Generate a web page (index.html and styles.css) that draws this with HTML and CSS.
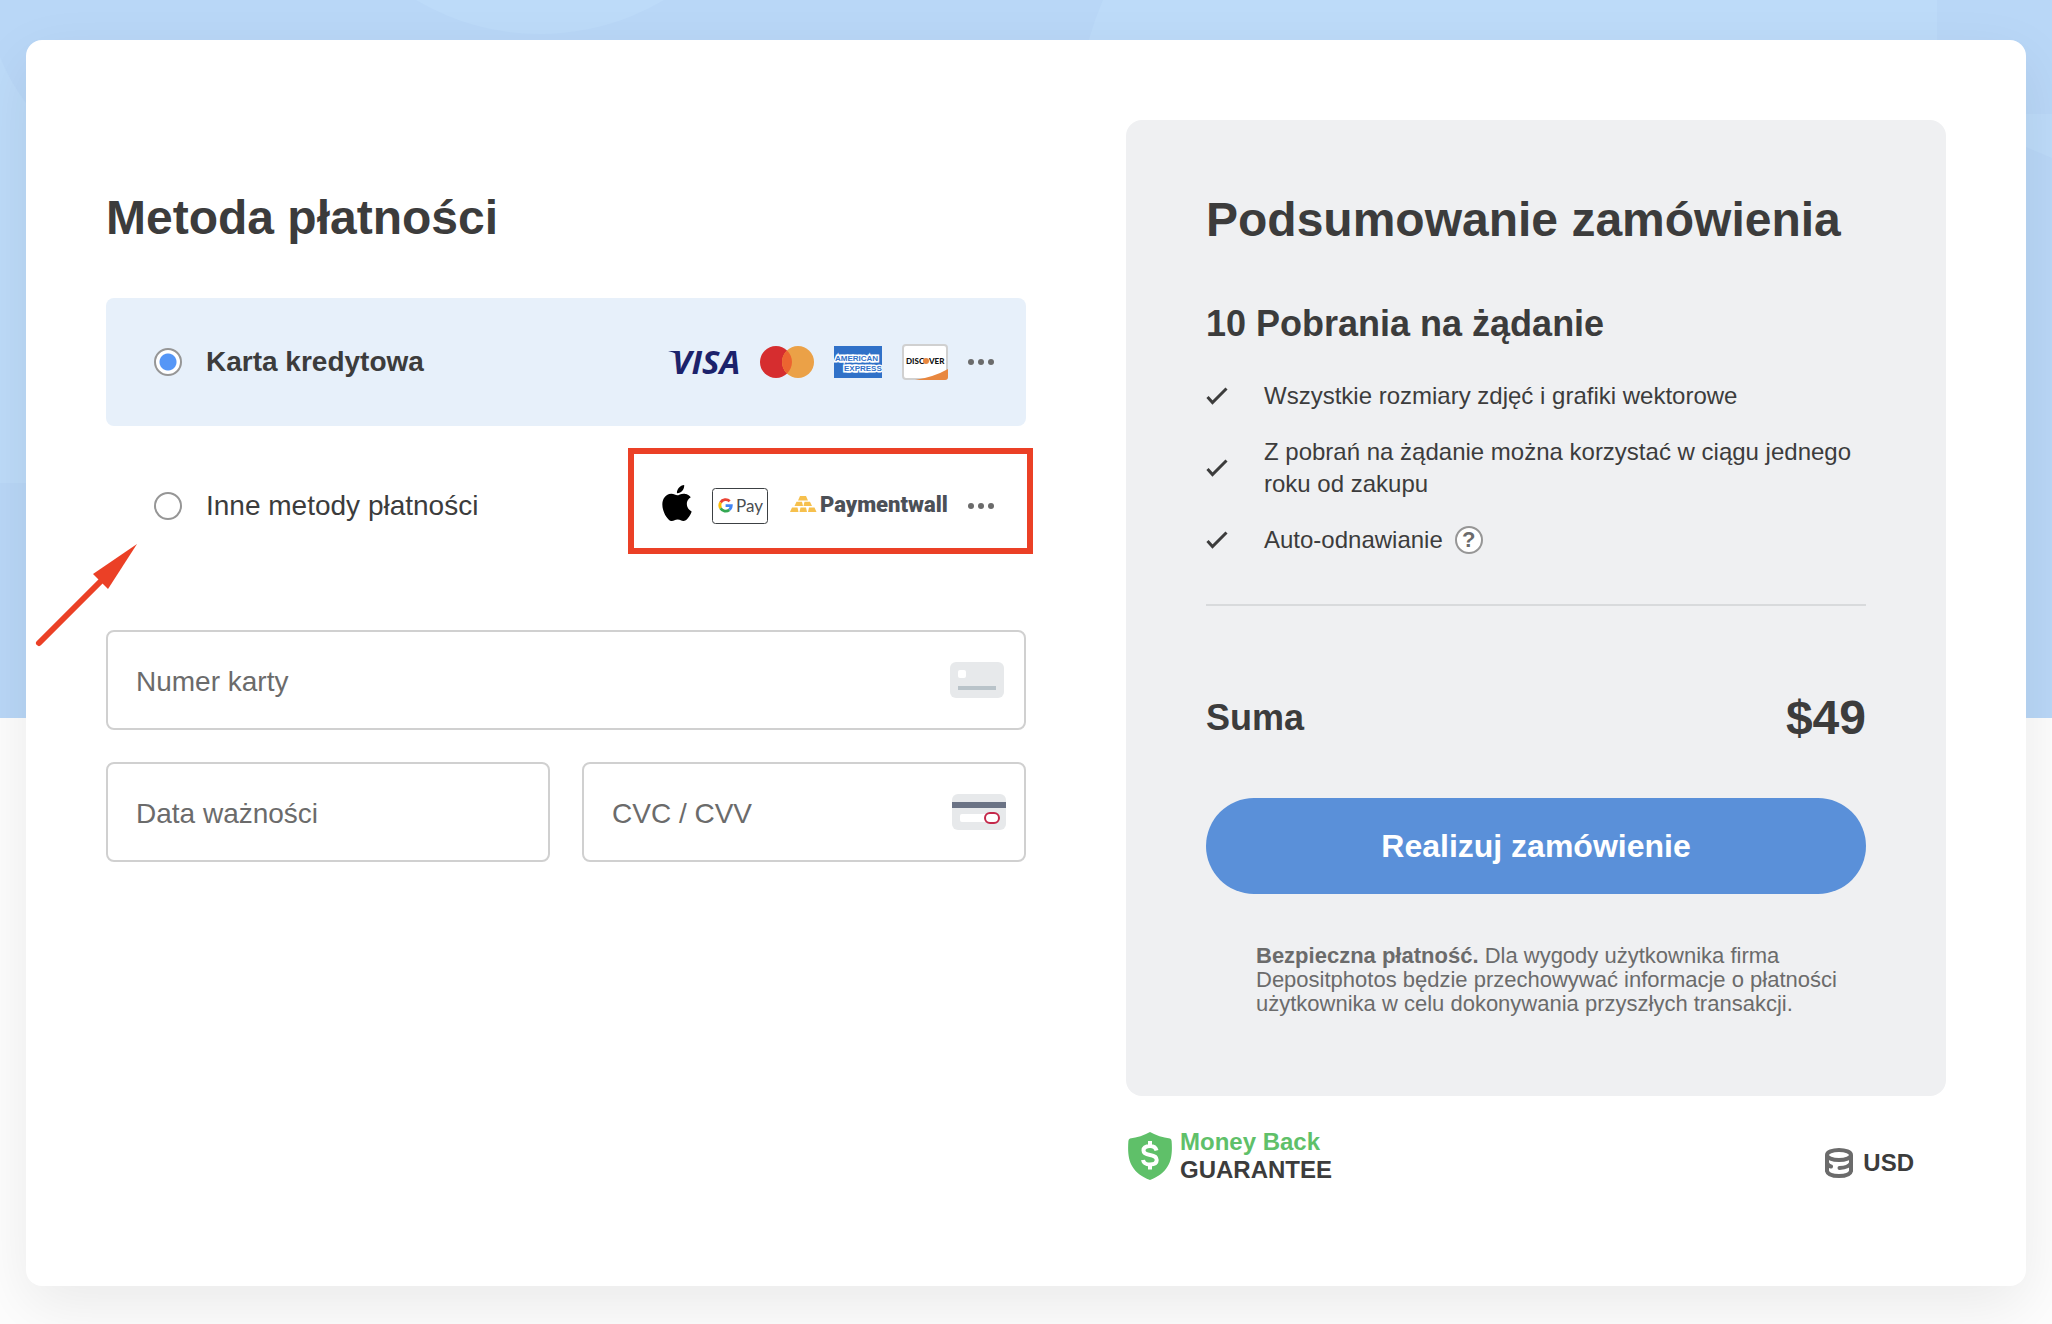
FILE: index.html
```html
<!DOCTYPE html>
<html lang="pl">
<head>
    <meta charset="utf-8">
    <meta name="viewport" content="width=device-width, initial-scale=1">
    <title>Metoda płatności</title>
    <link rel="stylesheet" href="styles.css">
</head>
<body>
    <div class="backdrop">
        <svg class="backdrop-shapes" width="2052" height="718" viewBox="0 0 2052 718" aria-hidden="true">
            <circle cx="540" cy="-209" r="243"/>
            <path d="M0 57Q10 82 26 103L120 300V483H0z"/>
            <path d="M1103 0H1937V114H2052V158L2026 147L1900 80H1080Q1086 40 1103 0z"/>
        </svg>
    </div>

    <main class="checkout">
        <form class="payment">
            <h1 class="title">Metoda płatności</h1>

            <div class="methods">
                <label class="method method-active">
                    <input class="method-radio" type="radio" name="method" checked>
                    <span class="method-name">Karta kredytowa</span>
                    <span class="logos">
                        <svg class="visa" width="72" height="24" viewBox="0 0 72 24" role="img" aria-label="Visa">
                            <path d="M0 1Q10 3 12 8L11 1z" fill="#1c226b"/>
                            <text class="visa-text" x="4" y="24">VISA</text>
                        </svg>
                        <svg width="54" height="32" viewBox="0 0 54 32" role="img" aria-label="Mastercard">
                            <circle cx="16" cy="16" r="16" fill="#d62d2f"/>
                            <circle cx="38" cy="16" r="16" fill="#eba147"/>
                            <path d="M27 4.400a16 16 0 0 1 0 23.200a16 16 0 0 1 0-23.200z" fill="#ec6430"/>
                        </svg>
                        <svg width="48" height="32" viewBox="0 0 48 32" role="img" aria-label="American Express">
                            <rect width="48" height="32" fill="#3071c8"/>
                            <text class="amex-text" x="1" y="15">AMERICAN</text>
                            <text class="amex-text" x="10" y="25">EXPRESS</text>
                        </svg>
                        <svg width="46" height="36" viewBox="0 0 46 36" role="img" aria-label="Discover">
                            <rect x="1" y="1" width="44" height="34" rx="3" fill="#fff" stroke="#d0d0d0" stroke-width="2"/>
                            <path d="M13 36Q32 33 46 25V33Q46 36 43 36z" fill="#e8873f"/>
                            <text class="discover-text" x="4" y="20">DISC</text>
                            <circle cx="24" cy="17" r="3" fill="#e8873f"/>
                            <text class="discover-text" x="27" y="20">VER</text>
                        </svg>
                        <svg width="26" height="6" viewBox="0 0 26 6" fill="#6b6b6b" aria-hidden="true">
                            <circle cx="3" cy="3" r="3"/><circle cx="13" cy="3" r="3"/><circle cx="23" cy="3" r="3"/>
                        </svg>
                    </span>
                </label>

                <label class="method">
                    <input class="method-radio" type="radio" name="method">
                    <span class="method-name">Inne metody płatności</span>
                    <span class="logos">
                        <svg class="apple" width="30" height="36" viewBox="2 0 20 24" role="img" aria-label="Apple Pay">
                            <path d="M12.152 6.896c-.948 0-2.415-1.078-3.96-1.04-2.04.027-3.91 1.183-4.961 3.014-2.117 3.675-.546 9.103 1.519 12.09 1.013 1.454 2.208 3.09 3.792 3.039 1.52-.065 2.09-.987 3.935-.987 1.831 0 2.35.987 3.96.948 1.637-.026 2.676-1.48 3.676-2.948 1.156-1.688 1.636-3.325 1.662-3.415-.039-.013-3.182-1.221-3.22-4.857-.026-3.04 2.48-4.494 2.597-4.559-1.429-2.09-3.623-2.324-4.39-2.376-2-.156-3.675 1.09-4.61 1.09zM15.53 3.83c.843-1.012 1.4-2.427 1.245-3.83-1.207.052-2.662.805-3.532 1.818-.78.896-1.454 2.338-1.273 3.714 1.338.104 2.715-.688 3.559-1.701"/>
                        </svg>
                        <svg width="56" height="36" viewBox="0 0 56 36" role="img" aria-label="Google Pay">
                            <rect x=".5" y=".5" width="55" height="35" rx="3" fill="#fff" stroke="#3c4043"/>
                            <g fill="none" stroke-width="2.8">
                                <path d="M17.7 13.3A5.8 5.8 0 0 0 8.6 14.5" stroke="#ea4335"/>
                                <path d="M8.6 14.5A5.8 5.8 0 0 0 8.6 20.3" stroke="#fbbc04"/>
                                <path d="M8.6 20.3A5.8 5.8 0 0 0 17.3 21.8" stroke="#34a853"/>
                                <path d="M17.3 21.8A5.8 5.8 0 0 0 19.3 17.6H13.6" stroke="#4285f4"/>
                            </g>
                            <text class="gpay-text" x="24" y="24">Pay</text>
                        </svg>
                        <svg width="160" height="32" viewBox="0 0 160 32" role="img" aria-label="Paymentwall">
                            <g fill="#f6c04d">
                                <path d="M12 6h6l2 4.500h-10z"/>
                                <path d="M8.500 11.700h5.500l1 4.300h-8.500zM16.500 11.700h5.500l2 4.300h-8.500z"/>
                                <path d="M4 17.500h5.500l1 4.500h-8.500zM12.500 17.500h5.500l1 4.500h-7.500zM21 17.500h5.500l2 4.500h-8.500z"/>
                            </g>
                            <text class="pwall-text" x="32" y="22">Paymentwall</text>
                        </svg>
                        <svg width="26" height="6" viewBox="0 0 26 6" fill="#6b6b6b" aria-hidden="true">
                            <circle cx="3" cy="3" r="3"/><circle cx="13" cy="3" r="3"/><circle cx="23" cy="3" r="3"/>
                        </svg>
                    </span>
                    <span class="marker"></span>
                    <svg class="arrow" width="104" height="106" viewBox="0 0 104 106" aria-hidden="true">
                        <path d="M5 101L68 38" stroke="#eb4026" stroke-width="6" stroke-linecap="round"/>
                        <path d="M103 2L59 32l5 5 5 5 5 5z" fill="#eb4026"/>
                    </svg>
                </label>
            </div>

            <div class="fields">
                <div class="field field-wide">
                    <input class="field-input" type="text" placeholder="Numer karty" aria-label="Numer karty">
                    <svg class="field-icon" width="56" height="36" viewBox="0 0 56 36" aria-hidden="true">
                        <rect width="54" height="36" rx="6" fill="#e7e9eb"/>
                        <rect x="8" y="8" width="8" height="8" rx="2" fill="#fff"/>
                        <rect x="8" y="24" width="38" height="4" fill="#b9c3c9"/>
                    </svg>
                </div>
                <div class="field">
                    <input class="field-input" type="text" placeholder="Data ważności" aria-label="Data ważności">
                </div>
                <div class="field">
                    <input class="field-input" type="text" placeholder="CVC / CVV" aria-label="CVC / CVV">
                    <svg class="field-icon" width="56" height="36" viewBox="0 0 56 36" aria-hidden="true">
                        <rect x="2" width="54" height="36" rx="6" fill="#e7e9eb"/>
                        <rect x="2" y="8" width="54" height="6" fill="#6b7385"/>
                        <rect x="10" y="20" width="30" height="8" rx="2" fill="#fff"/>
                        <rect x="35" y="19" width="14" height="10" rx="5" fill="#fff" stroke="#c4284a" stroke-width="2"/>
                    </svg>
                </div>
            </div>
        </form>

        <div class="side">
            <section class="summary">
                <h2 class="title">Podsumowanie zamówienia</h2>
                <h3 class="plan">10 Pobrania na żądanie</h3>
                <ul class="perks">
                    <li class="perk">
                        <svg class="check" width="22" height="18" viewBox="0 0 22 18" aria-hidden="true"><path d="M1.500 10l5 5.500L20.500 1.500"/></svg>
                        <span>Wszystkie rozmiary zdjęć i grafiki wektorowe</span>
                    </li>
                    <li class="perk">
                        <svg class="check" width="22" height="18" viewBox="0 0 22 18" aria-hidden="true"><path d="M1.500 10l5 5.500L20.500 1.500"/></svg>
                        <span>Z pobrań na żądanie można korzystać w ciągu jednego roku od zakupu</span>
                    </li>
                    <li class="perk">
                        <svg class="check" width="22" height="18" viewBox="0 0 22 18" aria-hidden="true"><path d="M1.500 10l5 5.500L20.500 1.500"/></svg>
                        <span class="renewal">Auto-odnawianie <button class="help" type="button">?</button></span>
                    </li>
                </ul>
                <div class="total">
                    <span>Suma</span>
                    <strong class="total-price">$49</strong>
                </div>
                <button class="submit" type="button">Realizuj zamówienie</button>
                <p class="note"><strong>Bezpieczna płatność.</strong> Dla wygody użytkownika firma Depositphotos będzie przechowywać informacje o płatności użytkownika w celu dokonywania przyszłych transakcji.</p>
            </section>

            <div class="side-footer">
                <div class="guarantee">
                    <svg width="44" height="48" viewBox="0 0 44 48" aria-hidden="true">
                        <path d="M22 0Q31 5 42 6.500Q43.500 7 43.600 9C45 27 42 40 22 48C2 40 -1 27 .4 9Q.5 7 2 6.500Q13 5 22 0z" fill="#5fc069"/>
                        <path d="M28.500 18.500Q27.500 14 22 14Q15.500 14 15.500 18.500Q15.500 22 22 23Q28.700 24 28.700 28Q28.700 32.500 22 32.500Q15.800 32.500 15 28M22 9v5M22 32.500v5" fill="none" stroke="#fff" stroke-width="4"/>
                    </svg>
                    <span class="guarantee-text"><span class="guarantee-green">Money Back</span>GUARANTEE</span>
                </div>
                <div class="currency">
                    <svg width="28" height="30" viewBox="0 0 28 30" fill="none" stroke="#6b6b6b" stroke-width="4" aria-hidden="true">
                        <ellipse cx="14" cy="7" rx="12" ry="5"/>
                        <path d="M2 7V23Q3 28 14 28Q25 28 26 23V7"/>
                        <path d="M2 15Q3.500 18 6 18.500M14.500 20Q24 19.500 26 15" stroke-linecap="round"/>
                    </svg>
                    USD
                </div>
            </div>
        </div>
    </main>
</body>
</html>
```

FILE: styles.css
```css
* {
    box-sizing: border-box;
}

body {
    position: relative;
    margin: 0;
    padding: 40px 26px 38px;
    background: #fdfdfd;
    color: #3c3c3c;
    font-family: "Liberation Sans", Arial, Helvetica, sans-serif;
    font-size: 24px;
    line-height: 32px;
}

h1, h2, h3, ul, p {
    margin: 0;
    padding: 0;
}

/* blue area behind the card */
.backdrop {
    position: absolute;
    top: 0;
    left: 0;
    right: 0;
    height: 718px;
    background: #b9d7f7;
    overflow: hidden;
}

.backdrop-shapes {
    display: block;
    fill: #bddbf9;
}

.checkout {
    position: relative;
    display: grid;
    grid-template-columns: 920fr 820fr;
    gap: 100px;
    padding: 80px 80px 102px;
    background: #fff;
    border-radius: 16px;
    box-shadow: 0 20px 60px rgba(0, 0, 0, 0.08);
}

.title {
    font-size: 48px;
    line-height: 56px;
}

/* payment form */
.payment {
    padding-top: 70px;
}

.methods {
    display: flex;
    flex-direction: column;
    gap: 16px;
    margin: 52px 0 60px;
}

.method {
    position: relative;
    display: flex;
    align-items: center;
    gap: 24px;
    height: 128px;
    padding: 0 32px 0 48px;
    border-radius: 8px;
    font-size: 28px;
    cursor: pointer;
}

.method-active {
    background: #e7f0fa;
    font-weight: bold;
}

.method-radio {
    appearance: none;
    width: 28px;
    height: 28px;
    margin: 0;
    border: 2px solid #969696;
    border-radius: 50%;
    background: #fff;
}

    .method-radio:checked {
        background: radial-gradient(circle, #5596f6 8px, #fff 9px);
    }

.logos {
    display: flex;
    align-items: center;
    gap: 20px;
    margin-left: auto;
}

.apple {
    margin-bottom: 6px;
}

.visa {
    overflow: visible;
}

.visa-text {
    font: italic bold 33px "Open Sans", sans-serif;
    fill: #1c226b;
}

.amex-text {
    font: bold 8px "Liberation Sans", Arial, sans-serif;
    fill: #3071c8;
    stroke: #fff;
    stroke-width: 3px;
    paint-order: stroke;
}

.discover-text {
    font: 900 8px Lato, sans-serif;
    fill: #111;
}

.gpay-text {
    font: 17px Lato, sans-serif;
    fill: #4a4d51;
}

.pwall-text {
    font: 900 22px Roboto, sans-serif;
    fill: #4c5057;
}

.marker {
    position: absolute;
    top: 6px;
    right: -7px;
    width: 405px;
    height: 106px;
    border: 6px solid #eb4026;
}

.arrow {
    position: absolute;
    top: 100px;
    left: -72px;
}

.fields {
    display: grid;
    grid-template-columns: 1fr 1fr;
    gap: 32px;
}

.field {
    position: relative;
}

.field-wide {
    grid-column: span 2;
}

.field-input {
    display: block;
    width: 100%;
    height: 100px;
    padding: 4px 96px 0 28px;
    border: 2px solid #d0d0d0;
    border-radius: 8px;
    background: #fff;
    color: #3c3c3c;
    font: inherit;
    font-size: 28px;
}

    .field-input::placeholder {
        color: #6b6b6b;
        opacity: 1;
    }

.field-icon {
    position: absolute;
    top: 32px;
    right: 20px;
}

/* order summary */
.summary {
    padding: 72px 80px 80px;
    border-radius: 16px;
    background: #eff0f2;
}

.plan {
    margin: 56px 0 36px;
    font-size: 36px;
    line-height: 40px;
}

.perks {
    display: flex;
    flex-direction: column;
    gap: 24px;
    padding-bottom: 48px;
    border-bottom: 2px solid #d8dadc;
    list-style: none;
}

.perk {
    display: flex;
    align-items: center;
    gap: 36px;
}

.check {
    flex: none;
    fill: none;
    stroke: #3c3c3c;
    stroke-width: 3;
}

.renewal {
    display: flex;
    align-items: center;
    gap: 12px;
}

.help {
    width: 28px;
    height: 28px;
    padding: 0;
    border: 2px solid #969696;
    border-radius: 50%;
    background: #fff;
    color: #6b6b6b;
    font: bold 22px/24px "Liberation Sans", Arial, sans-serif;
}

.total {
    display: flex;
    align-items: center;
    justify-content: space-between;
    margin: 84px 0 52px;
    font-size: 36px;
    font-weight: bold;
    line-height: 56px;
}

.total-price {
    font-size: 48px;
}

.submit {
    display: block;
    width: 100%;
    height: 96px;
    border: none;
    border-radius: 48px;
    background: #5a90d9;
    color: #fff;
    font: inherit;
    font-size: 32px;
    font-weight: bold;
    cursor: pointer;
}

.note {
    margin-top: 50px;
    padding: 0 24px 0 50px;
    color: #6b6b6b;
    font-size: 22px;
    line-height: 24px;
}

.side-footer {
    display: flex;
    align-items: center;
    justify-content: space-between;
    padding: 32px 32px 0 2px;
    font-weight: bold;
}

.guarantee {
    display: flex;
    align-items: center;
    gap: 8px;
}

.guarantee-text {
    display: flex;
    flex-direction: column;
    line-height: 28px;
}

.guarantee-green {
    color: #5fc069;
}

.currency {
    display: flex;
    align-items: center;
    gap: 10px;
    padding-top: 14px;
}
```
